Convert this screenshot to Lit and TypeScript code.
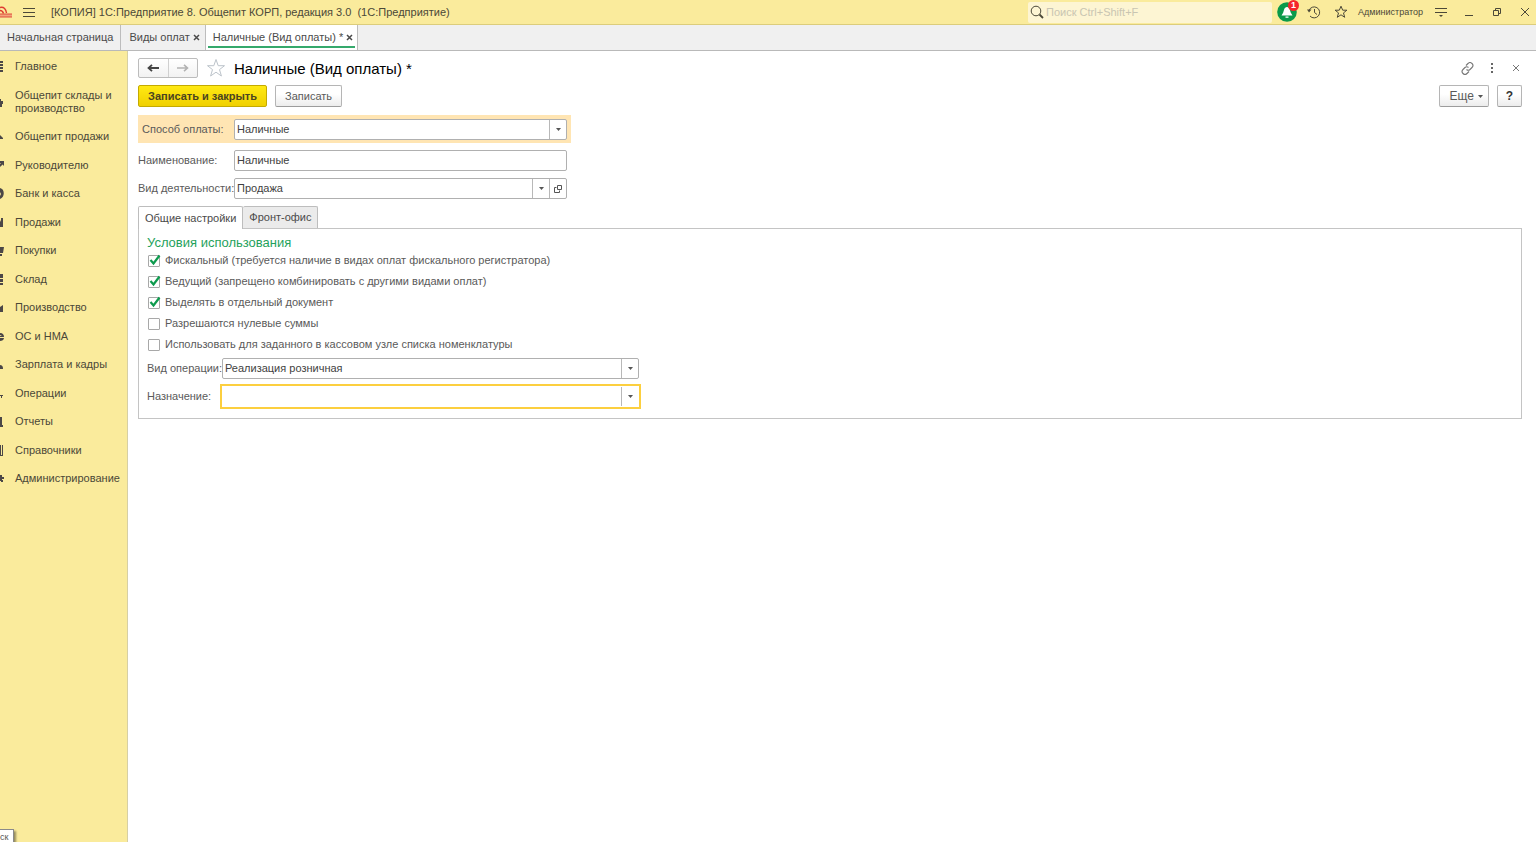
import { LitElement, html, css, svg, nothing } from "lit";
import { customElement, state } from "lit/decorators.js";
import { classMap } from "lit/directives/class-map.js";

interface Section {
  title: string;
  icon: unknown;
}

const sections: Section[] = [
  { title: "Главное", icon: svg`<path d="M0 1h3v2H0zM0 4h3v2H0zM0 7h3v2H0zM0 10h3v2H0z"/>` },
  { title: "Общепит склады и производство", icon: svg`<path d="M0 5h3v3H2v3H0zM0 3h1v2H0z"/>` },
  { title: "Общепит продажи", icon: svg`<path d="M0 5l3 3v1H0z"/>` },
  { title: "Руководителю", icon: svg`<path d="M0 2h4v5L2.600 5.400 0 8V5l1-1H0z"/>` },
  { title: "Банк и касса", icon: svg`<path d="M0 1c5 1 5 9 0 11V9l1-2-1-2z"/>` },
  { title: "Продажи", icon: svg`<path d="M0 4l1 2V2h2v9H0z"/>` },
  { title: "Покупки", icon: svg`<path d="M0 3h4L3 9H0zM0 10h2v2H0z"/>` },
  { title: "Склад", icon: svg`<path d="M0 1h3v4H0zM0 6h3v3H0zM0 10h3v2H0z"/>` },
  { title: "Производство", icon: svg`<path d="M0 6l3-2v7H0z"/>` },
  { title: "ОС и НМА", icon: svg`<path d="M0 3c3 0 4 2 4 4H0V6h2L0 5zM0 8h4c0 2-2 3-4 3V9z"/>` },
  { title: "Зарплата и кадры", icon: svg`<path d="M0 7c2 0 3 1 3 4H0z"/>` },
  { title: "Операции", icon: svg`<path d="M0 8h3v1H2v2H1V9H0z"/>` },
  { title: "Отчеты", icon: svg`<path d="M0 2h2v8h1v2H0z"/>` },
  { title: "Справочники", icon: svg`<path d="M0 1h1v10H0zM2 1h1v11H0v-1h2z"/>` },
  { title: "Администрирование", icon: svg`<path d="M0 3h2v2h2v2H2v1h1v2H1V9H0z"/>` },
];

const conditions = [
  { label: "Фискальный (требуется наличие в видах оплат фискального регистратора)", on: true },
  { label: "Ведущий (запрещено комбинировать с другими видами оплат)", on: true },
  { label: "Выделять в отдельный документ", on: true },
  { label: "Разрешаются нулевые суммы", on: false },
  { label: "Использовать для заданного в кассовом узле списка номенклатуры", on: false },
];

const base = css`
  :host,
  * {
    box-sizing: border-box;
  }
  button,
  input,
  select {
    font: inherit;
    color: inherit;
    margin: 0;
    padding: 0;
  }
  button {
    display: inline-flex;
    align-items: center;
    justify-content: center;
    border: 0;
    background: none;
    white-space: nowrap;
  }
  svg {
    display: block;
    flex: none;
  }
`;

@customElement("title-bar")
export class TitleBar extends LitElement {
  static styles = [
    base,
    css`
      :host {
        display: flex;
        align-items: center;
        height: 25px;
        background: #faeb9c;
        border-bottom: 1px solid #dccd7c;
        color: #4b4838;
      }
      .menu {
        margin-left: 10px;
      }
      .name {
        flex: 1;
        padding-left: 16px;
        font-size: 11px;
        font-weight: 400;
        margin: 0;
        white-space: pre;
      }
      .search {
        display: flex;
        align-items: center;
        width: 244px;
        height: 21px;
        padding-left: 2px;
        gap: 2px;
        background: #fdf5d3;
        border-radius: 2px;
      }
      .search input {
        flex: 1;
        min-width: 0;
        border: 0;
        outline: 0;
        background: none;
      }
      .search input::placeholder {
        color: #c9c5b2;
        opacity: 1;
      }
      .tools {
        display: flex;
        align-items: center;
        padding-left: 5px;
      }
      .bell {
        position: relative;
        margin-right: 8px;
      }
      .badge {
        position: absolute;
        top: 0;
        right: 0;
        width: 11px;
        height: 11px;
        border-radius: 50%;
        background: #f5252b;
        color: #fff;
        font-size: 9px;
        font-weight: 700;
        line-height: 11px;
        text-align: center;
      }
      .star {
        margin: 0 10px 0 13px;
      }
      .user {
        font-size: 9px;
      }
      .window {
        display: flex;
        gap: 16px;
        padding: 0 5px 0 12px;
      }
    `,
  ];

  render() {
    return html`
      <svg width="13" height="24" viewBox="0 0 13 24" fill="none" aria-hidden="true">
        <path d="M0 7.500c4-1 6 2 6.500 5.500M0 10.500c2 0 3 1 3.500 3" stroke="#df3a30" stroke-width="1.400" />
        <path d="M0 14h12v3H0z" fill="#f3a27a" />
        <path d="M0 14h12M0 17h12" stroke="#df4c3a" />
      </svg>
      <button class="menu" aria-label="Меню">
        <svg width="12" height="12" viewBox="0 0 12 12" stroke="#4b4838">
          <path d="M0 2.500h12M0 6.500h12M0 10.500h12" />
        </svg>
      </button>
      <h1 class="name">[КОПИЯ] 1С:Предприятие 8. Общепит КОРП, редакция 3.0  (1С:Предприятие)</h1>
      <label class="search">
        <svg width="14" height="14" viewBox="0 0 14 14" fill="none" stroke="#4b4838">
          <circle cx="6" cy="6" r="4.800" />
          <path d="M9.500 9.500l3.500 3.500" stroke-width="1.800" />
        </svg>
        <input type="search" aria-label="Поиск" placeholder="Поиск Ctrl+Shift+F" />
      </label>
      <div class="tools">
        <button class="bell" aria-label="Уведомления">
          <svg width="22" height="24" viewBox="0 0 22 24">
            <circle cx="10" cy="12" r="9.800" fill="#0a9a4a" />
            <path d="M10 7c3 0 3 4 4 6l1.500 2.500h-11L6 13c1-2 1-6 4-6zM8.500 16.500h3v1.200h-3z" fill="#fff" />
          </svg>
          <span class="badge">1</span>
        </button>
        <button aria-label="История">
          <svg width="14" height="14" viewBox="0 0 14 14" fill="none" stroke="#4b4838">
            <path d="M2 5.500A5.500 5.500 0 1 1 3 11M7.500 4v3.500l2.500 2" />
            <path d="M0 4.500h4.500L2 7.500z" fill="#4b4838" stroke="none" />
          </svg>
        </button>
        <button class="star" aria-label="Избранное">
          <svg width="14" height="14" viewBox="0 0 14 14" fill="none" stroke="#4b4838">
            <path d="M7 1.200l1.700 4h4.200L9.500 7.900l1.200 4.400L7 9.800l-3.700 2.500 1.200-4.400L1.100 5.200h4.200z" />
          </svg>
        </button>
        <button class="user">Администратор</button>
        <div class="window">
          <button aria-label="Настройки">
            <svg width="12" height="12" viewBox="0 0 12 12" stroke="#4b4838">
              <path d="M0 2.500h12M0 6.500h12" />
              <path d="M4 9h4l-2 2z" fill="#4b4838" stroke="none" />
            </svg>
          </button>
          <button aria-label="Свернуть">
            <svg width="12" height="12" viewBox="0 0 12 12"><path d="M2 9h8v1H2z" fill="#4b4838" /></svg>
          </button>
          <button aria-label="Развернуть">
            <svg width="12" height="12" viewBox="0 0 12 12" fill="none" stroke="#4b4838">
              <path d="M2.500 4.500h5v5h-5zM4.500 4V2.500h5v5H8" />
            </svg>
          </button>
          <button aria-label="Закрыть">
            <svg width="12" height="12" viewBox="0 0 12 12" stroke="#4b4838">
              <path d="M2 2l8 8M10 2l-8 8" />
            </svg>
          </button>
        </div>
      </div>
    `;
  }
}

@customElement("window-tabs")
export class WindowTabs extends LitElement {
  static styles = [
    base,
    css`
      :host {
        display: flex;
        height: 26px;
        background: #f0f0f0;
        border-bottom: 1px solid #b9b9b9;
        color: #4a4a4a;
      }
      .tab {
        display: flex;
        align-items: center;
        gap: 3px;
        padding: 0 5px 0 8px;
        border-right: 1px solid #bdbdbd;
      }
      .home {
        padding: 0 7px;
      }
      .active {
        position: relative;
        padding: 0 4px 0 7px;
        background: #fff;
      }
      .active::after {
        content: "";
        position: absolute;
        left: 2px;
        right: 2px;
        bottom: 2px;
        height: 2px;
        background: #35a96c;
      }
    `,
  ];

  private close(name: string) {
    return html`<button aria-label=${"Закрыть: " + name}>
      <svg width="7" height="7" viewBox="0 0 7 7" stroke="#4a4a4a" stroke-width="1.500">
        <path d="M1 1l5 5M6 1l-5 5" />
      </svg>
    </button>`;
  }

  render() {
    return html`
      <div class="tab home"><button>Начальная страница</button></div>
      <div class="tab"><button>Виды оплат</button>${this.close("Виды оплат")}</div>
      <div class="tab active"><button>Наличные (Вид оплаты) *</button>${this.close("Наличные")}</div>
    `;
  }
}

@customElement("section-panel")
export class SectionPanel extends LitElement {
  static styles = [
    base,
    css`
      :host {
        display: block;
        width: 128px;
        flex: none;
        padding-top: 1px;
        background: #faeb9c;
        border-right: 1px solid #d6cfa4;
        color: #4b4838;
      }
      ul {
        list-style: none;
        margin: 0;
        padding: 0;
      }
      .item {
        display: flex;
        align-items: center;
        gap: 11px;
        padding: 8px 7px 7px 0;
        line-height: 13px;
        color: inherit;
        text-decoration: none;
      }
      li:nth-child(odd) .item {
        padding-bottom: 8px;
      }
    `,
  ];

  render() {
    return html`<nav aria-label="Разделы">
      <ul>
        ${sections.map(
          (s) => html`<li>
            <a class="item" href="#">
              <svg width="4" height="13" viewBox="0 0 4 13" fill="#4b4747">${s.icon}</svg>
              <span>${s.title}</span>
            </a>
          </li>`
        )}
      </ul>
    </nav>`;
  }
}

@customElement("payment-form")
export class PaymentForm extends LitElement {
  static styles = [
    base,
    css`
      :host {
        display: block;
        flex: 1;
        min-width: 0;
        padding: 7px 14px 0 10px;
        background: #fff;
        color: #5a5a5a;
      }
      .head,
      .commands {
        display: flex;
        align-items: center;
      }
      .head {
        height: 20px;
        margin-bottom: 7px;
      }
      .history {
        display: flex;
        width: 60px;
        height: 20px;
        border: 1px solid #bcbcbc;
        border-radius: 2px;
        background: linear-gradient(#fff, #f2f2f2);
      }
      .history button {
        flex: 1;
      }
      .history button + button {
        border-left: 1px solid #d0d0d0;
      }
      .favorite {
        margin: 0 8px 0 8px;
      }
      .title {
        flex: 1;
        margin: 0;
        font-size: 15px;
        font-weight: 400;
        color: #000;
      }
      .actions {
        display: flex;
        gap: 12px;
      }
      .commands {
        gap: 8px;
        margin-bottom: 8px;
      }
      .btn {
        height: 22px;
        padding: 0 9px;
        border: 1px solid #b5b5b5;
        border-bottom-color: #9c9c9c;
        border-radius: 2px;
        background: linear-gradient(#fff 40%, #ececec);
      }
      .primary {
        border-color: #c4aa00;
        background: linear-gradient(#ffe913, #f0d000);
        color: #4a4420;
        font-weight: 700;
      }
      .more {
        gap: 4px;
        margin-left: auto;
        padding: 0 5px 0 10px;
        font-size: 12px;
      }
      .help {
        width: 25px;
        padding: 0;
        font-size: 12px;
        font-weight: 700;
        color: #333;
      }
      .fields {
        display: grid;
        gap: 7px;
        justify-items: start;
        margin-bottom: 7px;
      }
      .row {
        display: flex;
        align-items: center;
      }
      .row > label {
        width: 96px;
        white-space: nowrap;
      }
      .accent {
        padding: 4px 4px 3px;
        background: #ffe5b3;
      }
      .accent > label {
        width: 92px;
      }
      .box {
        display: flex;
        width: 333px;
        height: 21px;
        border: 1px solid #b0b0b0;
        border-radius: 2px;
        background: #fff;
        color: #3f3f3f;
      }
      .combo {
        display: grid;
        flex: 1;
        min-width: 0;
      }
      .combo > * {
        grid-area: 1 / 1;
      }
      .combo select,
      .text {
        appearance: none;
        width: 100%;
        padding: 0 20px 0 2px;
        border: 0;
        outline: 0;
        background: none;
      }
      .arrow {
        justify-self: end;
        display: grid;
        place-items: center;
        width: 17px;
        border-left: 1px solid #b8b8b8;
        pointer-events: none;
      }
      .open {
        width: 17px;
        border-left: 1px solid #b8b8b8;
      }
      .tabs {
        display: flex;
        height: 22px;
      }
      .tabs button {
        padding: 0 6px;
        border: 1px solid #bdbdbd;
        border-bottom: 0;
        border-radius: 2px 2px 0 0;
        background: #ebebeb;
        color: #4a4a4a;
      }
      .tabs button + button {
        border-left: 0;
      }
      .tabs .current {
        position: relative;
        height: 23px;
        background: #fff;
      }
      .panel {
        padding: 6px 8px 11px;
        border: 1px solid #c4c4c4;
      }
      .group {
        margin: 0;
        font-size: 13px;
        font-weight: 400;
        line-height: 15px;
        color: #1fa25c;
      }
      .check {
        display: flex;
        align-items: center;
        gap: 5px;
        height: 21px;
        width: max-content;
        padding-left: 1px;
      }
      .mark {
        display: grid;
      }
      .mark > * {
        grid-area: 1 / 1;
      }
      .mark input {
        appearance: none;
        width: 12px;
        height: 12px;
        border: 1px solid #a8a8a8;
        border-radius: 1px;
        background: #fff;
      }
      .mark svg {
        display: none;
        pointer-events: none;
      }
      .mark input:checked + svg {
        display: block;
      }
      .options {
        display: grid;
        gap: 7px;
        margin-top: 3px;
      }
      .options .row > label {
        width: 75px;
      }
      .options .box {
        width: 417px;
      }
      .options .focused {
        border-color: #fff;
        border-radius: 0;
        box-shadow: 0 0 0 2px #fccf3f;
      }
    `,
  ];

  @state() private page = 0;

  private combo(id: string, value: string) {
    return html`<div class="combo">
      <select id=${id}>
        <option>${value}</option>
      </select>
      <span class="arrow">
        <svg width="5" height="3" viewBox="0 0 5 3"><path d="M0 0h5L2.500 3z" fill="#555" /></svg>
      </span>
    </div>`;
  }

  private tab(index: number, label: string) {
    return html`<button
      role="tab"
      aria-selected=${this.page === index}
      class=${classMap({ current: this.page === index })}
      @click=${() => (this.page = index)}
    >
      ${label}
    </button>`;
  }

  private general() {
    return html`
      <h3 class="group">Условия использования</h3>
      ${conditions.map(
        (c) => html`<label class="check">
          <span class="mark">
            <input type="checkbox" ?checked=${c.on} />
            <svg width="12" height="12" viewBox="0 0 12 12" overflow="visible" fill="none">
              <path d="M2.500 5l3 3.500L11.500 0.500" stroke="#0d9b4e" stroke-width="2.200" />
            </svg>
          </span>
          ${c.label}
        </label>`
      )}
      <div class="options">
        <div class="row">
          <label for="operation">Вид операции:</label>
          <div class="box">${this.combo("operation", "Реализация розничная")}</div>
        </div>
        <div class="row">
          <label for="purpose">Назначение:</label>
          <div class="box focused">${this.combo("purpose", "")}</div>
        </div>
      </div>
    `;
  }

  render() {
    return html`
      <div class="head">
        <div class="history">
          <button aria-label="Назад">
            <svg width="12" height="8" viewBox="0 0 12 8" fill="none" stroke="#444" stroke-width="1.800">
              <path d="M12 4H2M5 0.800L1.500 4 5 7.200" />
            </svg>
          </button>
          <button aria-label="Вперед">
            <svg width="12" height="8" viewBox="0 0 12 8" fill="none" stroke="#b2b2b2" stroke-width="1.600">
              <path d="M0 4h10M7 0.800L10.500 4 7 7.200" />
            </svg>
          </button>
        </div>
        <button class="favorite" aria-label="В избранное">
          <svg width="20" height="20" viewBox="0 0 20 20" fill="none" stroke="#bcc3ca">
            <path d="M10 1.500l2.200 6.200h6.300l-5 3.900 1.900 6.400L10 14.200 4.600 18l1.900-6.400-5-3.900h6.300z" />
          </svg>
        </button>
        <h2 class="title">Наличные (Вид оплаты) *</h2>
        <div class="actions">
          <button aria-label="Ссылка">
            <svg width="13" height="13" viewBox="0 0 13 13" fill="none" stroke="#777" stroke-width="1.100">
              <path d="M5 3.500L7 1.500a2.600 2.600 0 0 1 4 4L9 7.500a2.600 2.600 0 0 1-3.500 0M8 9.500l-2 2a2.600 2.600 0 0 1-4-4l2-2a2.600 2.600 0 0 1 3.500 0" />
            </svg>
          </button>
          <button aria-label="Дополнительно">
            <svg width="12" height="12" viewBox="0 0 12 12" fill="#666">
              <path d="M5 1h2v2H5zM5 5h2v2H5zM5 9h2v2H5z" />
            </svg>
          </button>
          <button aria-label="Закрыть">
            <svg width="12" height="12" viewBox="0 0 12 12" stroke="#777">
              <path d="M3 3l6 6M9 3l-6 6" />
            </svg>
          </button>
        </div>
      </div>

      <div class="commands">
        <button class="btn primary">Записать и закрыть</button>
        <button class="btn">Записать</button>
        <button class="btn more">
          Еще
          <svg width="5" height="3" viewBox="0 0 5 3"><path d="M0 0h5L2.500 3z" fill="#555" /></svg>
        </button>
        <button class="btn help" aria-label="Справка">?</button>
      </div>

      <div class="fields">
        <div class="row accent">
          <label for="method">Способ оплаты:</label>
          <div class="box">${this.combo("method", "Наличные")}</div>
        </div>
        <div class="row">
          <label for="name">Наименование:</label>
          <div class="box"><input class="text" id="name" type="text" value="Наличные" /></div>
        </div>
        <div class="row">
          <label for="activity">Вид деятельности:</label>
          <div class="box">
            ${this.combo("activity", "Продажа")}
            <button class="open" aria-label="Открыть">
              <svg width="8" height="8" viewBox="0 0 8 8" fill="none" stroke="#555">
                <path d="M3.500 0.500h4v4h-4zM2.500 2.500h-2v5h5v-2" />
              </svg>
            </button>
          </div>
        </div>
      </div>

      <div class="tabs" role="tablist">${this.tab(0, "Общие настройки")}${this.tab(1, "Фронт-офис")}</div>
      <div class="panel" role="tabpanel">${this.page === 0 ? this.general() : nothing}</div>
    `;
  }
}

@customElement("app-root")
export class AppRoot extends LitElement {
  static styles = css`
    :host {
      position: relative;
      display: flex;
      flex-direction: column;
      min-height: 100vh;
      overflow: hidden;
      font-family: "Liberation Sans", Arial, sans-serif;
      font-size: 11px;
      line-height: 13px;
      background: #fff;
    }
    .body {
      display: flex;
      flex: 1;
    }
    .hint {
      position: absolute;
      left: 0;
      bottom: 0;
      box-sizing: border-box;
      width: 14px;
      height: 13px;
      padding-top: 2px;
      border: solid #8a8a8a;
      border-width: 1px 1px 0 0;
      background: #fff;
      box-shadow: 2px 2px 2px #00000066;
      color: #575757;
      font-size: 9px;
      line-height: 11px;
    }
  `;

  render() {
    return html`
      <title-bar></title-bar>
      <window-tabs></window-tabs>
      <div class="body">
        <section-panel></section-panel>
        <payment-form></payment-form>
      </div>
      <div class="hint" role="tooltip">ск</div>
    `;
  }
}
